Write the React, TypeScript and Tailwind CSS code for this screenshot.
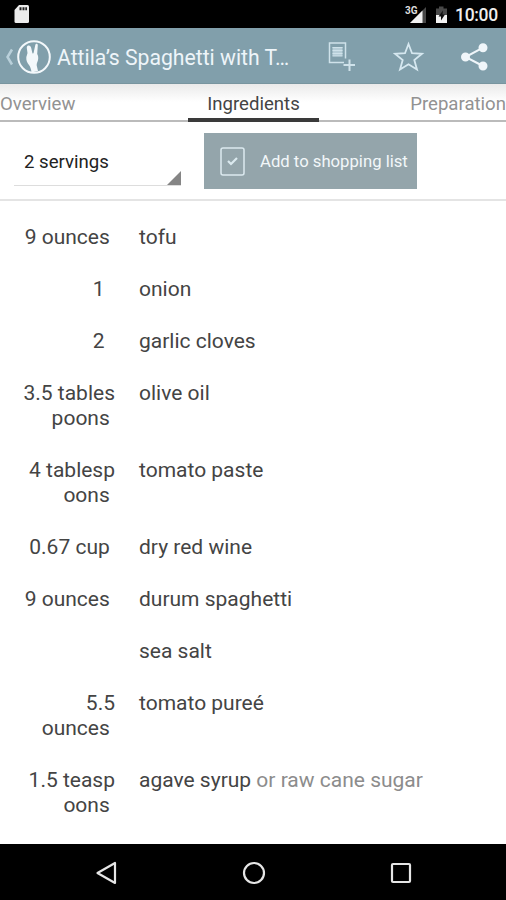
import React from "react";

const ingredients = [
  { amount: ["9 ounces "], name: "tofu" },
  { amount: ["1  "], name: "onion" },
  { amount: ["2  "], name: "garlic cloves" },
  { amount: ["3.5 tables", "poons "], name: "olive oil" },
  { amount: ["4 tablesp", "oons "], name: "tomato paste" },
  { amount: ["0.67 cup "], name: "dry red wine" },
  { amount: ["9 ounces "], name: "durum spaghetti" },
  { amount: [" "], name: "sea salt" },
  { amount: ["5.5", "ounces "], name: "tomato pureé" },
  { amount: ["1.5 teasp", "oons "], name: "agave syrup", note: "or raw cane sugar" },
];

const StatusBar = () => {
  return (
    <div className="flex h-7 shrink-0 items-center justify-between bg-black pl-3.5 pr-2 text-white">
      <svg width="16" height="18" viewBox="0 0 16 18">
        <path d="M5 0H13.5Q15 0 15 1.500V16.500Q15 18 13.500 18H2Q.5 18 .5 16.500V5Z" fill="#ececec" />
        <path d="M5.500 2.300h2v3h-2zM8.500 2.300h2v3h-2zM11.300 2.300h1.700v3h-1.700z" fill="#222" />
      </svg>
      <div className="flex items-center">
        <svg className="mt-0.5" width="46" height="20" viewBox="0 0 46 20">
          <path d="M25 2V18H9Z" fill="#484848" />
          <path d="M21.500 5.500V18H9Z" fill="#f2f2f2" />
          <text x="4" y="8.500" fontSize="10" fontWeight="700" fill="#ddd" stroke="#000" strokeWidth="2" paintOrder="stroke" fontFamily="Roboto">
            3G
          </text>
          <path d="M35 3.500h3V1.500h4.500v2h3.500V18H35Z" fill="#484848" />
          <path d="M35 10h11v8H35Z" fill="#f2f2f2" />
          <path d="M42 5.500 37.500 11.500h2.500V15.500L44 9.500H41.500Z" fill="#111" />
        </svg>
        <span className="ml-2 mt-0.5 w-[43px] whitespace-nowrap text-[17.500px] font-medium leading-7 tracking-[-0.3px] text-[#eee]">
          10:00
        </span>
      </div>
    </div>
  );
};

const Header = () => {
  return (
    <header className="flex h-14 shrink-0 items-center border-b border-[#78959f] bg-[#819fab] pl-1 pr-[17px] pt-0.5">
      <svg width="10" height="20" viewBox="0 0 10 20" fill="none" stroke="#b9d0da" strokeWidth="2.500">
        <path d="M8 2.500 3.500 10 8 17.500" />
      </svg>
      <svg className="ml-0.5" width="36" height="36" viewBox="0 0 36 36">
        <circle cx="18" cy="18" r="15.800" fill="none" stroke="#f3f8fb" strokeWidth="2" />
        <path
          d="M12.200 6.500c1.500-.5 2.600.8 3 2.500l1.300 5.500 1-.2 1.800-8.300c.4-1.800 2.600-1.500 2.500.3l-.6 8.700c1 1.500 1.300 4 .8 6-.5 2.200-1.500 3.500-1.300 5.500l1.300 5.500-6.500 1.500c-.3-3-1-5.500-2.500-7.500-1.500-2-3-4.500-2.700-7.500.2-1.800 1-3 1.200-4.500L10.800 9c-.2-1.200.4-2.200 1.400-2.500Z"
          fill="#f3f8fb"
        />
      </svg>
      <h1 className="ml-[5px] mt-0.5 w-[270px] whitespace-nowrap text-[21.200px] leading-7 text-[#eef5f9]">
        Attila’s Spaghetti with T…
      </h1>
      <svg className="shrink-0" width="30" height="30" viewBox="0 0 30 30" fill="none" stroke="#cfe2ea" strokeWidth="1.500">
        <path d="M17 20.500H2.500V1H18.500V16.500" />
        <path d="M5.500 5h10v9h-10z" fill="#b7ced8" stroke="none" />
        <path d="M5.500 5.500h10M5.500 8.500h10M5.500 11.500h10M5.500 14h10" strokeWidth="1" />
        <path d="M22.500 17.500v11.500M16.500 23h11.500" strokeWidth="2" />
      </svg>
      <svg className="ml-9 shrink-0" width="32" height="32" viewBox="0 0 32 32" fill="none" stroke="#d6e8f0" strokeWidth="1.800">
        <path d="m15.500 3 3.500 9.200 10 .6-7.700 6.200 2.700 9.500-8.500-5.200L7 28.500 9.700 19 2 12.800l10-.6Z" />
      </svg>
      <svg className="ml-9 shrink-0" width="28" height="28" viewBox="0 0 28 28" fill="#f0f6fa" stroke="#f0f6fa" strokeWidth="2">
        <path d="M22 4.700 4.500 14 22 23" fill="none" />
        <circle cx="22" cy="4.800" r="3.500" />
        <circle cx="4.500" cy="14" r="3.500" />
        <circle cx="22" cy="23" r="3.500" />
      </svg>
    </header>
  );
};

const Tabs = () => {
  return (
    <nav className="flex h-[38px] shrink-0 items-stretch justify-between border-b-2 border-[#bbb] bg-linear-to-b from-[#eaeaea] to-white to-50% text-[18.600px] leading-10 text-[#929292]">
      <span className="w-[188px]">Overview</span>
      <span className="-mb-0.5 w-[131px] border-b-4 border-[#3a3a3a] text-center text-[#444]">
        Ingredients
      </span>
      <span className="w-[187px] text-right">Preparation</span>
    </nav>
  );
};

const Controls = () => {
  return (
    <div className="flex h-[79px] shrink-0 items-start border-b-2 border-[#e4e4e4] pl-[14px] pt-[11px]">
      <div className="mr-[23px] flex h-[53px] w-[167px] items-end justify-between border-b border-[#ddd]">
        <span className="pb-[9px] pl-2.5 text-[18.600px] leading-7 text-[#222]">2 servings</span>
        <svg width="14" height="14" viewBox="0 0 14 14">
          <path d="M14 0V14H0Z" fill="#858585" />
        </svg>
      </div>
      <button className="flex h-14 w-[213px] items-center bg-[#94a5ab] pl-4 text-[16.700px] text-[#f2f7f9]">
        <svg className="shrink-0" width="25" height="29" viewBox="0 0 25 29" fill="none" stroke="#dbe9ef">
          <rect x="1" y="1" width="23" height="27" rx="2" strokeWidth="1.500" />
          <path d="m8 14 3 3 6-6" strokeWidth="2.200" />
        </svg>
        <span className="ml-[15px] mt-0.5 whitespace-nowrap">Add to shopping list</span>
      </button>
    </div>
  );
};

const App = () => {
  return (
    <div className="flex h-[900px] w-[506px] flex-col overflow-hidden bg-white font-['Roboto',sans-serif]">
      <StatusBar />
      <Header />
      <Tabs />
      <Controls />
      <ul className="flex grow flex-col gap-[27px] pt-6 text-[21px] leading-[25px] text-[#444]">
        {ingredients.map((item, index) => (
          <li key={index} className="flex">
            <div className="flex w-[115px] flex-col items-end">
              {item.amount.map((line) => (
                <div key={line} className="whitespace-pre">
                  {line}
                </div>
              ))}
            </div>
            <p className="ml-6">
              {item.name}
              {item.note && <span className="text-[#8c8c8c]"> {item.note}</span>}
            </p>
          </li>
        ))}
      </ul>
      <footer className="flex h-14 shrink-0 items-center justify-between bg-black pl-[95px] pr-[93px] pt-0.5">
        <svg width="24" height="24" viewBox="0 0 24 24" fill="none" stroke="#e6e6e6" strokeWidth="2.200" strokeLinejoin="round">
          <path d="M20 2V22L2.500 12Z" />
        </svg>
        <svg width="24" height="24" viewBox="0 0 24 24" fill="none" stroke="#e6e6e6" strokeWidth="2.200">
          <circle cx="12" cy="12" r="10" />
        </svg>
        <svg width="24" height="24" viewBox="0 0 24 24" fill="none" stroke="#e6e6e6" strokeWidth="2.200">
          <rect x="3" y="3" width="18" height="18" rx="1" />
        </svg>
      </footer>
    </div>
  );
};

export default App;
